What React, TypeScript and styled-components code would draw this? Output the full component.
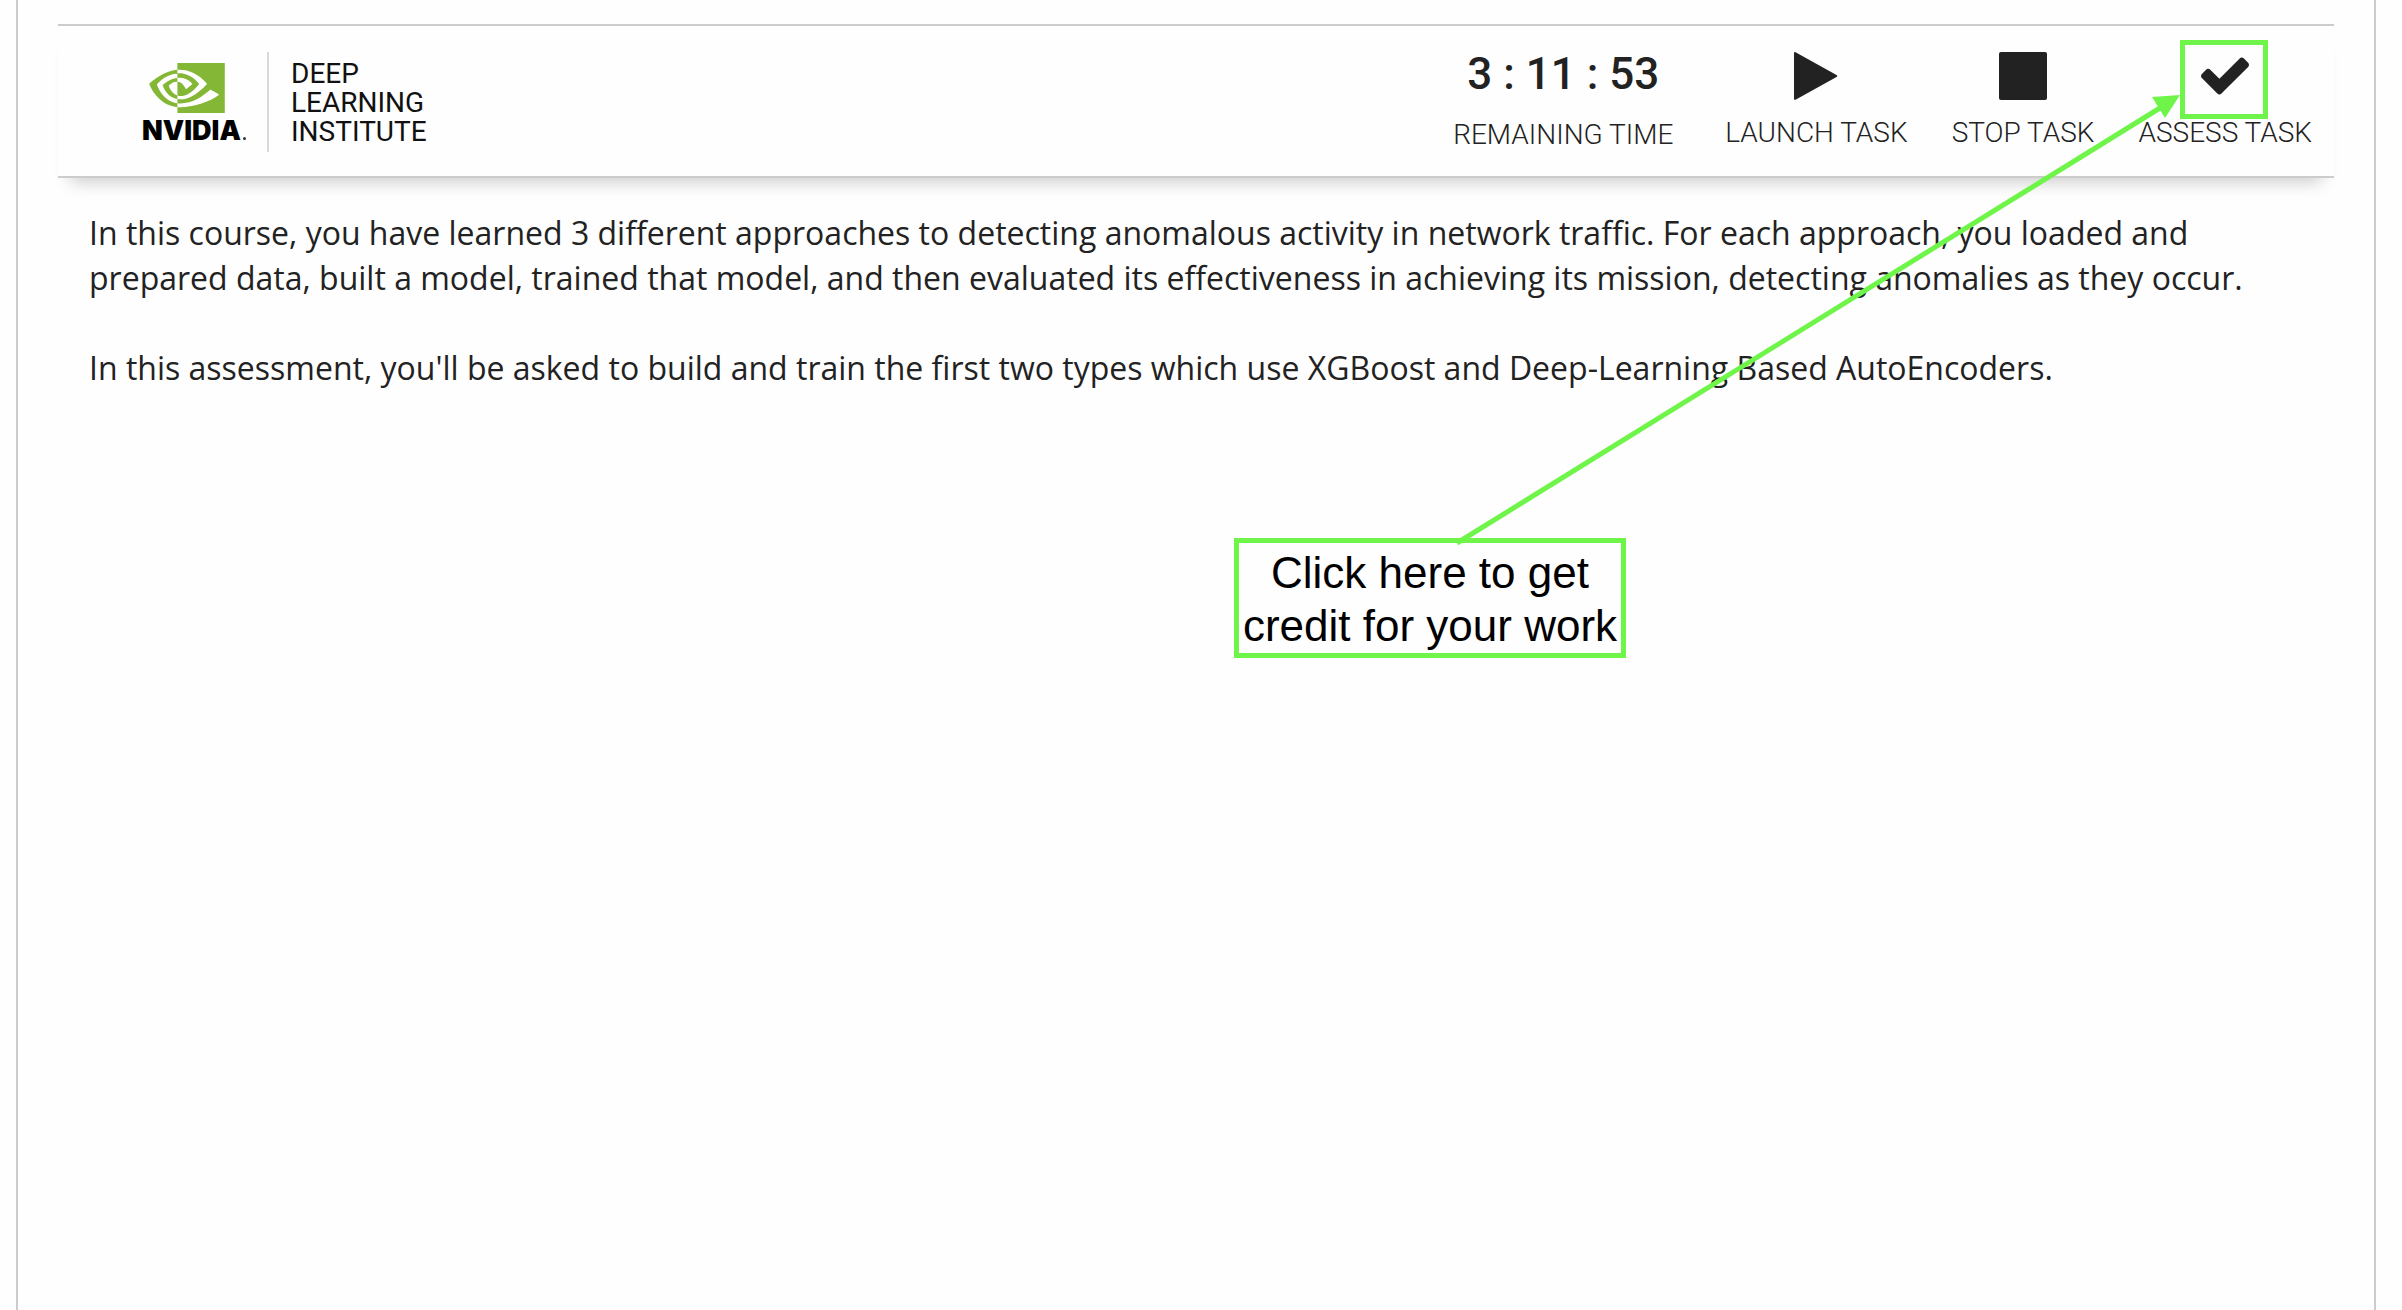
import React from "react";
import styled, { createGlobalStyle } from "styled-components";

const ink = "#222222";
const rule = "#cccccc";
const accent = "#6ff549";

const GlobalStyle = createGlobalStyle`
  *, *::before, *::after { box-sizing: border-box; }
  body { margin: 0; background: #fefefe; color: ${ink}; }
`;

const Frame = styled.div`
  position: relative;
  min-height: 100vh;
  margin: 0 26px 0 16px;
  padding: 24px 40px 0;
  border: solid ${rule};
  border-width: 0 2px;
`;

const Bar = styled.header`
  display: flex;
  justify-content: space-between;
  height: 154px;
  padding: 26px 22px 0 84px;
  border: solid ${rule};
  border-width: 2px 0;
  background: #fefefe;
  box-shadow: 0 16px 16px -12px rgba(0, 0, 0, 0.2);
`;

const Brand = styled.div`
  display: flex;
  align-items: flex-start;
`;

const Logo = styled.div`
  display: flex;
  flex-direction: column;
  width: 127px;
  height: 100px;
  padding-top: 11px;
  border-right: 2px solid #d9d9d9;
`;

const Eye = styled.svg`
  width: 76px;
  height: 50px;
  margin-left: 7px;
  fill: #85b737;
`;

const Wordmark = styled.span`
  display: flex;
  align-items: baseline;
  margin-top: 3px;
  font: 900 27px/30px Inter, sans-serif;
  color: #000;
`;

const Registered = styled.i`
  width: 3px;
  height: 3px;
  margin-left: 2px;
  border-radius: 50%;
  background: #333;
`;

const Division = styled.p`
  margin: 0;
  padding: 7px 0 0 22px;
  font: 400 28px/29px Roboto, sans-serif;
  color: #111;
`;

const Controls = styled.div`
  display: flex;
  align-items: flex-start;
  gap: 44px;
`;

const Timer = styled.div`
  display: flex;
  flex-direction: column;
  align-items: center;
  margin-right: 8px;
`;

const Clock = styled.time`
  height: 67px;
  font: 500 44px/44px Roboto, sans-serif;
  white-space: pre;
`;

const Label = styled.span`
  font: 300 28px/32px Roboto, sans-serif;
  white-space: nowrap;
`;

const Task = styled.button`
  position: relative;
  display: flex;
  flex-direction: column;
  align-items: center;
  gap: 17px;
  padding: 0;
  border: 0;
  background: none;
  color: inherit;
  cursor: pointer;
`;

const Icon = styled.svg`
  width: 48px;
  height: 48px;
  fill: currentColor;
`;

const Highlight = styled.span`
  position: absolute;
  top: -12px;
  left: 50%;
  width: 88px;
  height: 79px;
  margin-left: -45px;
  border: 5px solid ${accent};
`;

const Article = styled.main`
  padding: 32px 31px;
  font: 400 32px/45px "Open Sans", sans-serif;
`;

const Paragraph = styled.p`
  margin: 0 0 45px;
`;

const Arrow = styled.svg`
  position: absolute;
  top: 90px;
  right: 192px;
  width: 730px;
  height: 460px;
  pointer-events: none;
`;

const Callout = styled.aside`
  position: absolute;
  top: 538px;
  right: 748px;
  width: 392px;
  height: 120px;
  padding-top: 3px;
  border: 5px solid ${accent};
  font: 400 44px/53px "Liberation Sans", sans-serif;
  text-align: center;
  white-space: nowrap;
  color: #000;
`;

export default function App() {
  return (
    <>
      <GlobalStyle />
      <Frame>
        <Bar>
          <Brand>
            <Logo>
              <Eye viewBox="0 4.063 24 15.875" aria-hidden="true">
                <path d="M8.948 8.798v-1.43a6.7 6.7 0 0 1 .424-.018c3.922-.124 6.493 3.374 6.493 3.374s-2.774 3.851-5.75 3.851c-.398 0-.787-.062-1.158-.185v-4.346c1.528.185 1.837.857 2.747 2.385l2.04-1.714s-1.492-1.952-4-1.952a6.016 6.016 0 0 0-.796.035m0-4.735v2.138l.424-.027c5.45-.185 9.01 4.47 9.01 4.47s-4.08 4.964-8.33 4.964c-.37 0-.733-.035-1.095-.097v1.325c.3.035.61.062.91.062 3.957 0 6.82-2.023 9.593-4.408.459.371 2.34 1.263 2.73 1.652-2.633 2.208-8.772 3.984-12.253 3.984-.335 0-.653-.018-.971-.053v1.864H24V4.063zm0 10.326v1.131c-3.657-.654-4.673-4.46-4.673-4.46s1.758-1.944 4.673-2.262v1.237H8.94c-1.528-.186-2.73 1.245-2.73 1.245s.68 2.412 2.739 3.11M2.456 10.9s2.164-3.197 6.5-3.533V6.201C4.153 6.59 0 10.653 0 10.653s2.35 6.802 8.948 7.42v-1.237c-4.84-.6-6.492-5.936-6.492-5.936z" />
              </Eye>
              <Wordmark>
                NVIDIA
                <Registered />
              </Wordmark>
            </Logo>
            <Division>
              DEEP
              <br />
              LEARNING
              <br />
              INSTITUTE
            </Division>
          </Brand>
          <Controls>
            <Timer>
              <Clock>3 : 11 : 53</Clock>
              <Label>REMAINING TIME</Label>
            </Timer>
            <Task type="button">
              <Icon viewBox="0 0 48 48" aria-hidden="true">
                <path d="M2 1.5Q2 -.6 4 .5L44.500 23Q46 24 44.500 25L4 47.500Q2 48.600 2 46.500Z" />
              </Icon>
              <Label>LAUNCH TASK</Label>
            </Task>
            <Task type="button">
              <Icon viewBox="0 0 48 48" aria-hidden="true">
                <rect width="48" height="48" rx="2" />
              </Icon>
              <Label>STOP TASK</Label>
            </Task>
            <Task type="button">
              <Icon viewBox="121 334 1550 1188" aria-hidden="true">
                <path d="M1671 566q0 40-28 68l-724 724-136 136q-28 28-68 28t-68-28l-136-136-362-362q-28-28-28-68t28-68l136-136q28-28 68-28t68 28l294 295 656-657q28-28 68-28t68 28l136 136q28 28 28 68z" />
              </Icon>
              <Label>ASSESS TASK</Label>
              <Highlight />
            </Task>
          </Controls>
        </Bar>
        <Article>
          <Paragraph>
            In this course, you have learned 3 different approaches to detecting anomalous activity in network traffic.
            For each approach, you loaded and prepared data, built a model, trained that model, and then evaluated its
            effectiveness in achieving its mission, detecting anomalies as they occur.
          </Paragraph>
          <Paragraph>
            In this assessment, you'll be asked to build and train the first two types which use XGBoost and
            Deep-Learning Based AutoEncoders.
          </Paragraph>
        </Article>
        <Callout>
          Click here to get
          <br />
          credit for your work
        </Callout>
        <Arrow viewBox="0 0 730 460" aria-hidden="true">
          <path d="M5 453L708 18" fill="none" stroke={accent} strokeWidth="5" />
          <path d="M728 5L700 7L713 28Z" fill={accent} />
        </Arrow>
      </Frame>
    </>
  );
}
